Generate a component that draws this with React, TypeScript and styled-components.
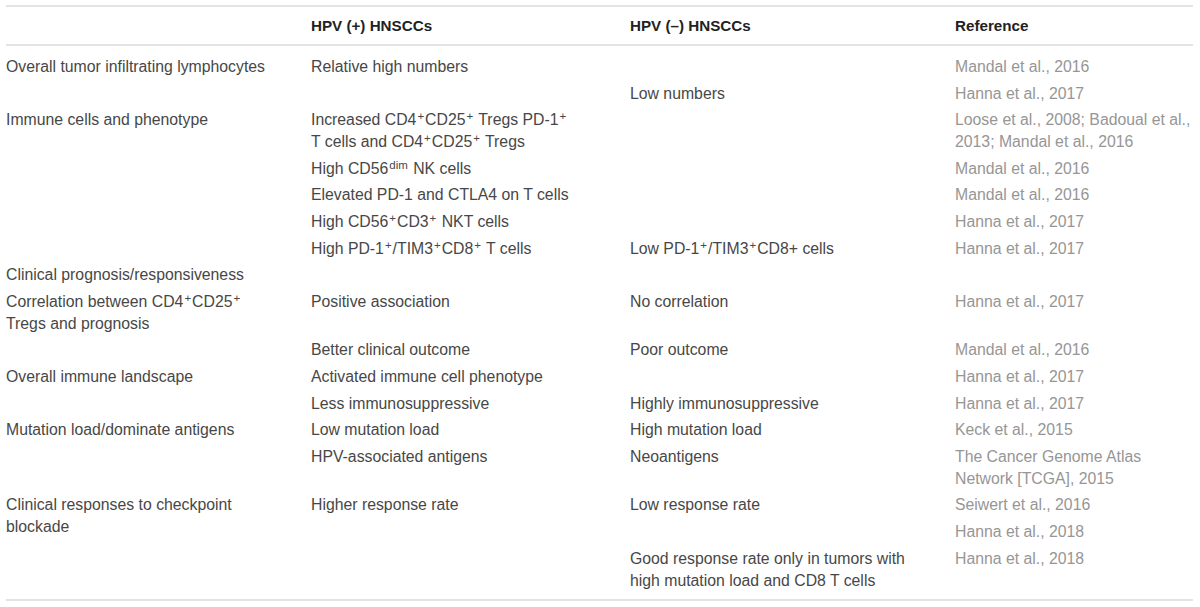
import React from "react";
import styled, { createGlobalStyle } from "styled-components";

const Global = createGlobalStyle`
  html, body { margin: 0; padding: 0; background: #ffffff; }
  body { font-family: "Liberation Sans", Arial, sans-serif; }
`;

const Page = styled.div`
  padding: 5px 7px 0 6px;
  width: 1200px;
  box-sizing: border-box;
`;

const Table = styled.table`
  width: 100%;
  border-collapse: collapse;
  table-layout: fixed;
  border-top: 2px solid #e3e3e3;
  border-bottom: 2px solid #e3e3e3;
`;

const Head = styled.thead`
  border-bottom: 2px solid #e3e3e3;
`;

const HeadCell = styled.th`
  height: 37px;
  padding: 0;
  text-align: left;
  vertical-align: middle;
  font-weight: bold;
  font-size: 15.2px;
  color: #222;
`;

const Body = styled.tbody`
  tr:first-child td { padding-top: 10px; }
  tr:last-child td { padding-bottom: 7px; }
`;

const Cell = styled.td<{ $muted?: boolean }>`
  padding: 2.3px 0;
  vertical-align: top;
  font-size: 15.8px;
  line-height: 22px;
  white-space: nowrap;
  color: ${(p) => (p.$muted ? "#969696" : "#474747")};
`;

const Sup = styled.sup`
  font-size: 11.5px;
  line-height: 0;
  vertical-align: 5px;
  margin: 0 1px;
`;

const P = () => <Sup>+</Sup>;

type Node = React.ReactNode;
type R = { a?: Node; aSpan?: number; skipA?: boolean; b?: Node; c?: Node; d?: Node };

const rows: R[] = [
  { a: "Overall tumor infiltrating lymphocytes", b: "Relative high numbers", d: "Mandal et al., 2016" },
  { c: "Low numbers", d: "Hanna et al., 2017" },
  {
    a: "Immune cells and phenotype",
    b: (
      <>
        Increased CD4<P />CD25<P /> Tregs PD-1<P />
        <br />T cells and CD4<P />CD25<P /> Tregs
      </>
    ),
    d: (
      <>
        Loose et al., 2008; Badoual et al.,
        <br />
        2013; Mandal et al., 2016
      </>
    ),
  },
  { b: <>High CD56<Sup>dim</Sup> NK cells</>, d: "Mandal et al., 2016" },
  { b: "Elevated PD-1 and CTLA4 on T cells", d: "Mandal et al., 2016" },
  { b: <>High CD56<P />CD3<P /> NKT cells</>, d: "Hanna et al., 2017" },
  {
    b: <>High PD-1<P />/TIM3<P />CD8<P /> T cells</>,
    c: <>Low PD-1<P />/TIM3<P />CD8+ cells</>,
    d: "Hanna et al., 2017",
  },
  { a: "Clinical prognosis/responsiveness" },
  {
    a: (
      <>
        Correlation between CD4<P />CD25<P />
        <br />
        Tregs and prognosis
      </>
    ),
    b: "Positive association",
    c: "No correlation",
    d: "Hanna et al., 2017",
  },
  { b: "Better clinical outcome", c: "Poor outcome", d: "Mandal et al., 2016" },
  { a: "Overall immune landscape", b: "Activated immune cell phenotype", d: "Hanna et al., 2017" },
  { b: "Less immunosuppressive", c: "Highly immunosuppressive", d: "Hanna et al., 2017" },
  { a: "Mutation load/dominate antigens", b: "Low mutation load", c: "High mutation load", d: "Keck et al., 2015" },
  {
    b: "HPV-associated antigens",
    c: "Neoantigens",
    d: (
      <>
        The Cancer Genome Atlas
        <br />
        Network [TCGA], 2015
      </>
    ),
  },
  {
    a: (
      <>
        Clinical responses to checkpoint
        <br />
        blockade
      </>
    ),
    aSpan: 2,
    b: "Higher response rate",
    c: "Low response rate",
    d: "Seiwert et al., 2016",
  },
  { skipA: true, d: "Hanna et al., 2018" },
  {
    c: (
      <>
        Good response rate only in tumors with
        <br />
        high mutation load and CD8 T cells
      </>
    ),
    d: "Hanna et al., 2018",
  },
];

export default function App() {
  return (
    <Page>
      <Global />
      <Table>
        <colgroup>
          <col style={{ width: 305 }} />
          <col style={{ width: 319 }} />
          <col style={{ width: 325 }} />
          <col />
        </colgroup>
        <Head>
          <tr>
            <HeadCell />
            <HeadCell>HPV (+) HNSCCs</HeadCell>
            <HeadCell>HPV (–) HNSCCs</HeadCell>
            <HeadCell>Reference</HeadCell>
          </tr>
        </Head>
        <Body>
          {rows.map((r, i) => (
            <tr key={i}>
              {!r.skipA && <Cell rowSpan={r.aSpan}>{r.a}</Cell>}
              <Cell>{r.b}</Cell>
              <Cell>{r.c}</Cell>
              <Cell $muted>{r.d}</Cell>
            </tr>
          ))}
        </Body>
      </Table>
    </Page>
  );
}
